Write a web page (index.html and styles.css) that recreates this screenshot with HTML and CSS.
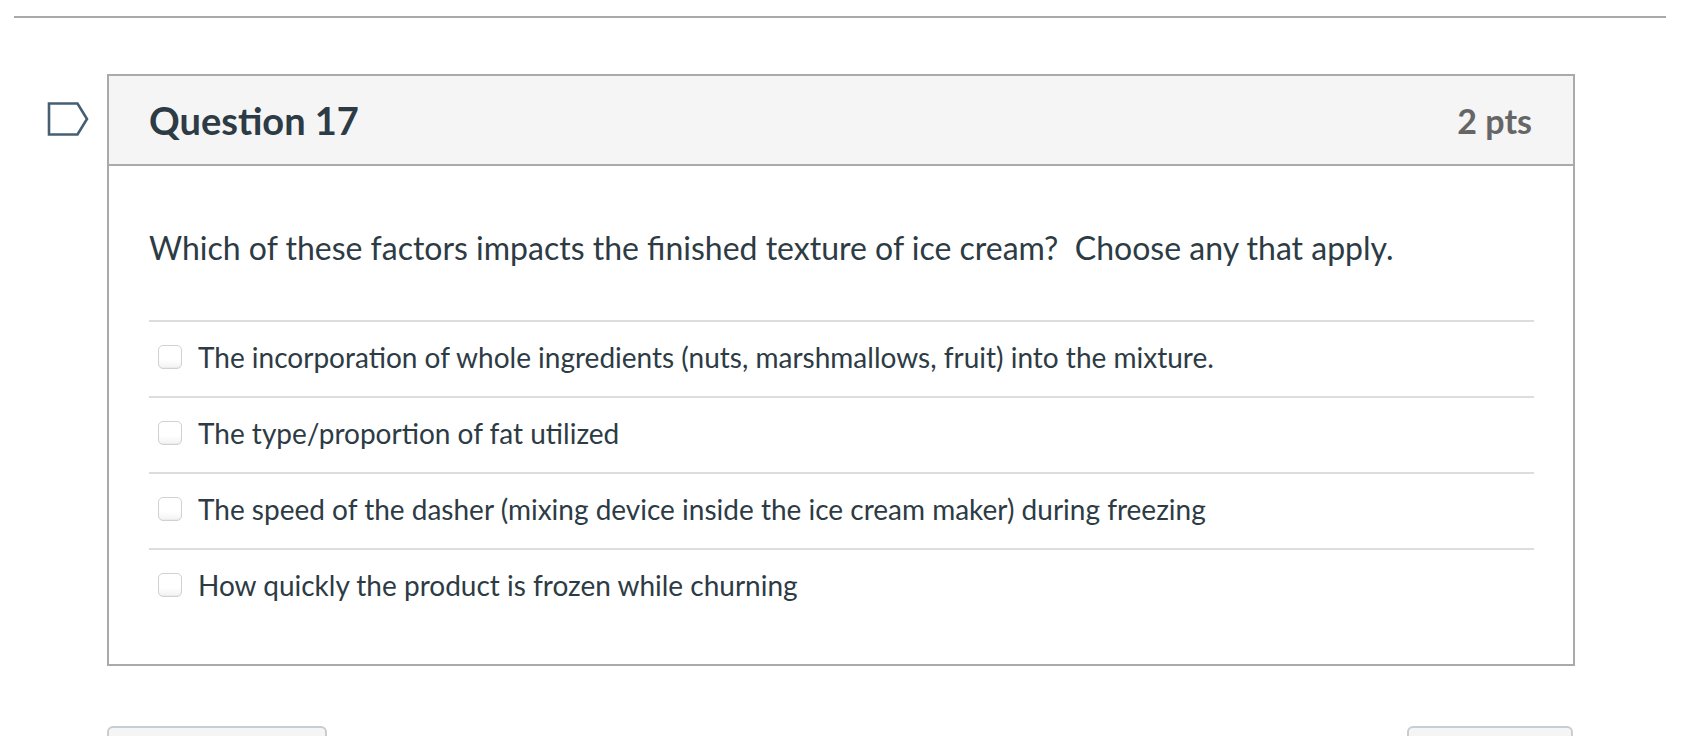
FILE: index.html
```html
<!DOCTYPE html>
<html>
<head>
<meta charset="utf-8">
<link rel="stylesheet" href="styles.css">
</head>
<body>
<div class="rule"></div>
<div class="quiz">
  <div class="flag-col">
    <svg class="flag" width="43" height="34" viewBox="0 0 43 34">
      <path d="M2 1.5 H30.5 L40 17 L30.5 32.5 H2 Z" fill="none" stroke="#465f73" stroke-width="2.6" stroke-linejoin="miter"/>
    </svg>
  </div>
  <div class="question">
    <div class="q-header">
      <span class="q-name">Question 17</span>
      <span class="q-pts">2 pts</span>
    </div>
    <div class="q-body">
      <p class="q-text">Which of these factors impacts the finished texture of ice cream?&nbsp; Choose any that apply.</p>
      <div class="answers">
        <label class="answer"><span class="box"></span><span class="a-text">The incorporation of whole ingredients (nuts, marshmallows, fruit) into the mixture.</span></label>
        <label class="answer"><span class="box"></span><span class="a-text">The type/proportion of fat utilized</span></label>
        <label class="answer"><span class="box"></span><span class="a-text">The speed of the dasher (mixing device inside the ice cream maker) during freezing</span></label>
        <label class="answer"><span class="box"></span><span class="a-text">How quickly the product is frozen while churning</span></label>
      </div>
    </div>
  </div>
</div>
<div class="nav">
  <div class="btn btn-prev"></div>
  <div class="btn btn-next"></div>
</div>
</body>
</html>
```
FILE: styles.css
```css
html, body {
  margin: 0;
  padding: 0;
  background: #fff;
  font-family: Lato, "Open Sans", "Liberation Sans", sans-serif;
  color: #2d3b45;
  overflow: hidden;
}
.rule {
  margin: 16px 16px 0 14px;
  height: 2px;
  background: #a9a9a9;
}
.quiz {
  display: flex;
  margin-top: 56px;
}
.flag-col {
  width: 107px;
  flex: none;
}
.flag {
  display: block;
  margin: 28px 0 0 47px;
}
.question {
  width: 1464px;
  border: 2px solid #aaaaaa;
}
.q-header {
  height: 88px;
  background: #f5f5f5;
  border-bottom: 2px solid #aaaaaa;
  display: flex;
  align-items: center;
  justify-content: space-between;
  padding: 0 41px 0 40px;
  font-weight: 700;
}
.q-name {
  font-size: 38px;
  color: #2d3b45;
}
.q-pts {
  font-size: 34px;
  color: #666666;
}
.q-body {
  padding: 0 39px 40px 40px;
}
.q-text {
  margin: 0;
  padding: 62px 0 0 0;
  height: 92px;
  font-size: 32px;
  line-height: 40px;
}
.answers {
  display: flex;
  flex-direction: column;
}
.answer {
  display: flex;
  align-items: center;
  height: 70px;
  padding-bottom: 4px;
  border-top: 2px solid #dddddd;
  padding-left: 9px;
}
.box {
  width: 22px;
  height: 22px;
  border: 1px solid #cfd2d4;
  border-radius: 5px;
  background: linear-gradient(#ffffff 60%, #f3f3f3);
  box-shadow: inset 0 -1px 1px rgba(0,0,0,0.04);
  flex: none;
  margin-right: 16px;
}
.a-text {
  font-size: 28px;
  line-height: 34px;
}
.nav {
  display: flex;
  justify-content: space-between;
  margin: 60px 109px 0 107px;
}
.btn {
  height: 40px;
  border: 2px solid #c7cdd1;
  border-radius: 6px;
  background: #f5f5f5;
}
.btn-prev { width: 216px; }
.btn-next { width: 162px; }
```
